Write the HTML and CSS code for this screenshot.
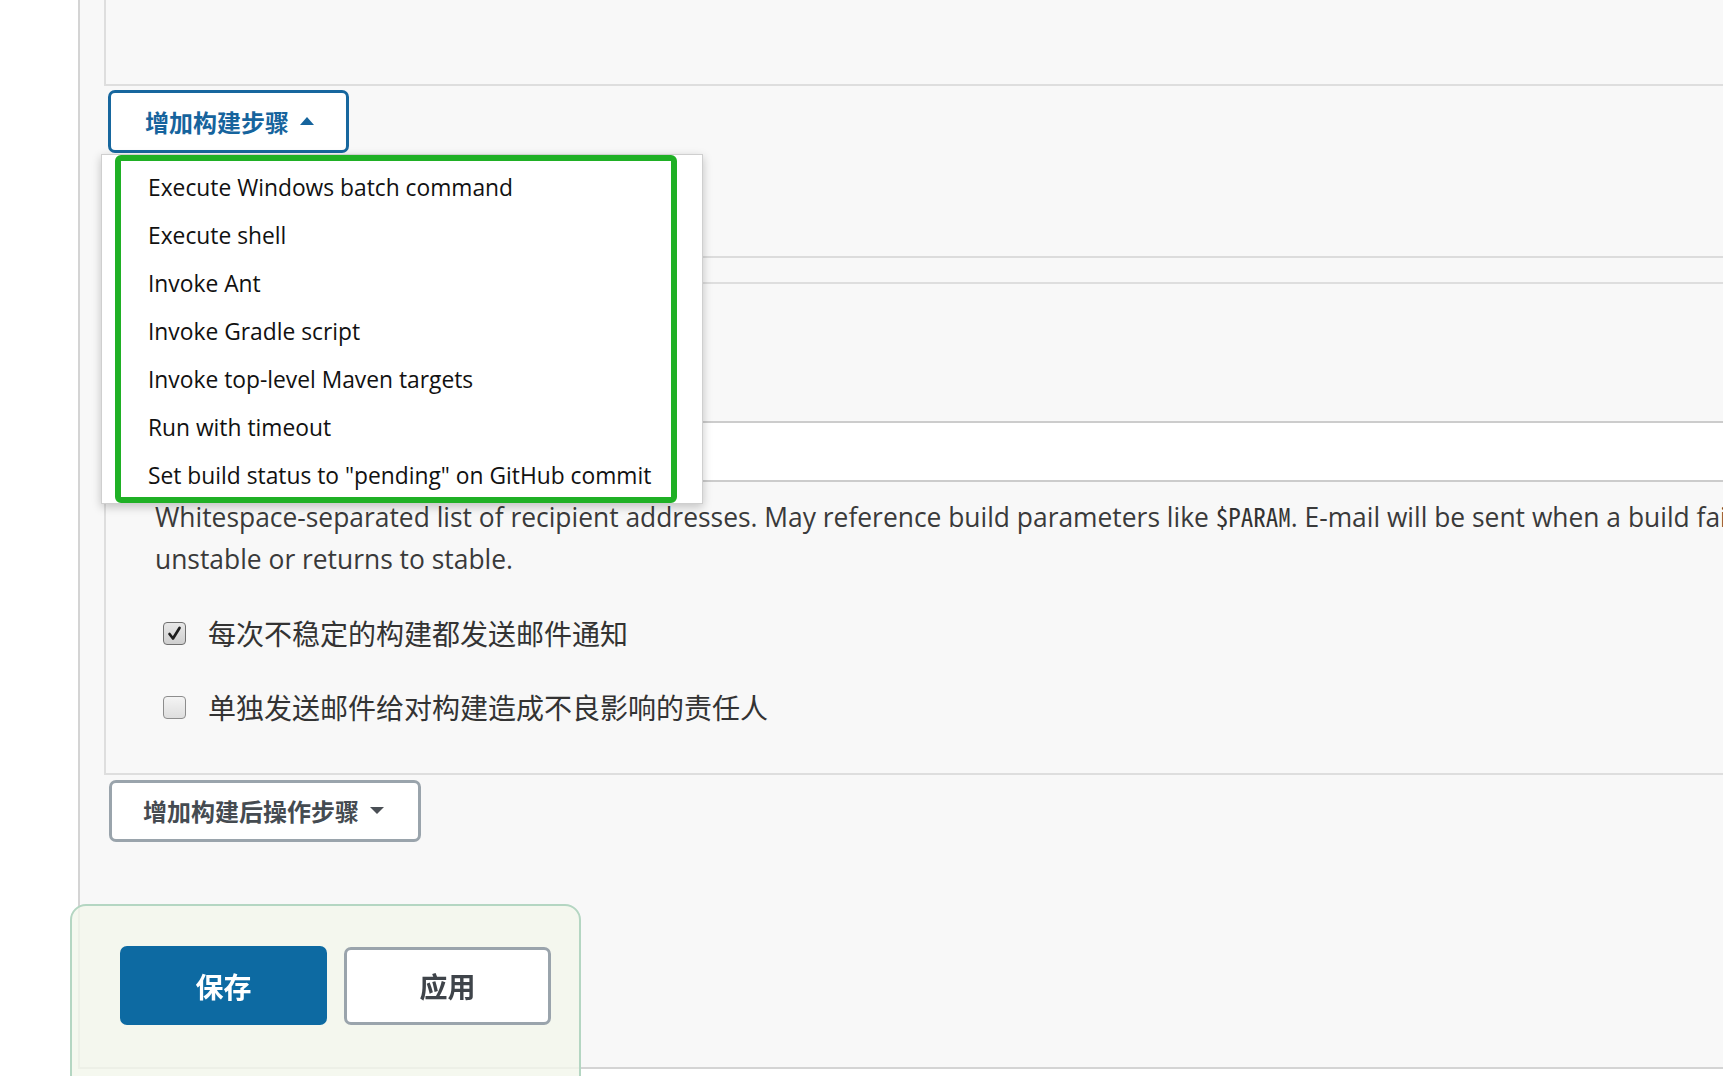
FILE: index.html
```html
<!DOCTYPE html>
<html lang="zh-CN">
<head>
<meta charset="utf-8">
<title>Jenkins 配置</title>
<link rel="stylesheet" href="styles.css">
</head>
<body>
<div class="page">
  <div class="gutter"></div>
  <main class="main">
    <div class="panel panel-top"></div>

    <div class="add-step">
      <button class="btn btn-blue">增加构建步骤<span class="caret caret-up"></span></button>
      <div class="dropdown">
        <ul class="menu">
          <li>Execute Windows batch command</li>
          <li>Execute shell</li>
          <li>Invoke Ant</li>
          <li>Invoke Gradle script</li>
          <li>Invoke top-level Maven targets</li>
          <li>Run with timeout</li>
          <li>Set build status to "pending" on GitHub commit</li>
        </ul>
      </div>
    </div>

    <div class="section-hidden"></div>

    <div class="panel panel-mail">
      <div class="field-label"></div>
      <div class="text-input"></div>
      <div class="help">Whitespace-separated list of recipient addresses. May reference build parameters like <code>$PARAM</code>. E-mail will be sent when a build fails, becomes<br>unstable or returns to stable.</div>
      <label class="check">
        <span class="box box-checked"><svg viewBox="0 0 23 23" width="23" height="23"><path d="M6.5 12 L10 16.5 L16.5 6" fill="none" stroke="#1e1e1e" stroke-width="2.7" stroke-linecap="round" stroke-linejoin="round"/></svg></span>
        <span class="check-text">每次不稳定的构建都发送邮件通知</span>
      </label>
      <label class="check">
        <span class="box"></span>
        <span class="check-text">单独发送邮件给对构建造成不良影响的责任人</span>
      </label>
    </div>

    <div class="post-step">
      <button class="btn btn-gray">增加构建后操作步骤<span class="caret caret-down"></span></button>
    </div>
  </main>
</div>

<div class="footer-bar">
  <button class="btn-save">保存</button>
  <button class="btn-apply">应用</button>
</div>
</body>
</html>
```

FILE: styles.css
```css
html, body {
  margin: 0;
  padding: 0;
}
body {
  width: 1723px;
  height: 1076px;
  overflow: hidden;
  background: #ffffff;
  font-family: "Open Sans", "Noto Sans CJK SC", sans-serif;
  color: #333;
}
.page {
  display: flex;
  align-items: flex-start;
}
.gutter {
  width: 78px;
  flex: none;
}
.main {
  flex: none;
  width: 2400px;
  height: 1067px;
  background: #f8f8f8;
  border-left: 2px solid #d4d4d4;
  border-bottom: 2px solid #d4d4d4;
  padding-left: 24px;
  box-sizing: content-box;
}
.panel {
  background: #f8f8f8;
  border: 2px solid #dedede;
}
.panel-top {
  height: 84px;
  border-top: none;
}

/* buttons */
.btn {
  display: flex;
  align-items: center;
  background: #fff;
  border-radius: 7px;
  font-family: "Noto Sans CJK SC", sans-serif;
  font-weight: 700;
  font-size: 24px;
  line-height: 1;
  box-sizing: border-box;
  cursor: pointer;
}
.btn-blue {
  height: 63px;
  width: 241px;
  border: 3px solid #17679e;
  color: #16649d;
  padding: 0 0 0 34px;
}
.btn-gray {
  height: 62px;
  width: 312px;
  border: 3px solid #9aa4ac;
  color: #454b51;
  padding: 0 0 0 31px;
}
.caret {
  display: inline-block;
  width: 0;
  height: 0;
  margin-left: 11px;
}
.caret-up {
  border-left: 7.5px solid transparent;
  border-right: 7.5px solid transparent;
  border-bottom: 8px solid #16649d;
  margin-top: -2px;
}
.caret-down {
  border-left: 7px solid transparent;
  border-right: 7px solid transparent;
  border-top: 7px solid #4a4f55;
  margin-top: -2px;
}

.add-step {
  position: relative;
  margin: 4px 0 0 4px;
  height: 63px;
}
.dropdown {
  position: absolute;
  z-index: 10;
  left: -7px;
  top: 64px;
  width: 602px;
  background: #fff;
  border: 1px solid #cfcfcf;
  box-shadow: 0 3px 9px rgba(0, 0, 0, 0.22);
  box-sizing: border-box;
}
.menu {
  list-style: none;
  margin: 0 25px 0 13px;
  padding: 0;
  border: 6px solid #1fb025;
  border-radius: 6px;
}
.menu li {
  height: 45px;
  padding-top: 3px;
  line-height: 48px;
  padding-left: 27px;
  font-size: 22.8px;
  color: #111;
  white-space: nowrap;
}

.section-hidden {
  height: 103px;
  border-bottom: 2px solid #dcdcdc;
}

.panel-mail {
  margin-top: 24px;
  height: 489px;
  display: flex;
  flex-direction: column;
}
.field-label {
  height: 137px;
  flex: none;
}
.text-input {
  flex: none;
  height: 57px;
  margin-left: 49px;
  background: #fff;
  border-top: 2px solid #cccccc;
  border-bottom: 2px solid #cccccc;
  border-left: 2px solid #cccccc;
}
.help {
  margin-top: 14px;
  padding-left: 49px;
  font-size: 26.4px;
  line-height: 42px;
  color: #3a3a3a;
  white-space: nowrap;
}
.help code {
  font-family: "Noto Sans Mono CJK SC", "Liberation Mono", monospace;
  font-size: 25px;
  line-height: 0;
  color: #333;
}
.check {
  display: flex;
  align-items: center;
  height: 44px;
  margin-left: 57px;
  font-family: "Noto Sans CJK SC", sans-serif;
  font-size: 28px;
  color: #333;
}
.check + .check {
  margin-top: 30px;
}
.help + .check {
  margin-top: 31px;
}
.box {
  flex: none;
  width: 23px;
  height: 23px;
  box-sizing: border-box;
  border: 1.5px solid #8d8d8d;
  border-radius: 4px;
  background: linear-gradient(#f4f4f4, #dedede);
  margin-right: 22px;
  display: flex;
  align-items: center;
  justify-content: center;
}
.box svg {
  display: block;
  margin: -1.5px;
}
.box-checked {
  border-color: #6f6f6f;
  background: linear-gradient(#e8e8e8, #cfcfcf);
}

.post-step {
  margin: 5px 0 0 5px;
}

/* bottom bar */
.footer-bar {
  position: fixed;
  left: 70px;
  top: 904px;
  width: 511px;
  height: 240px;
  box-sizing: border-box;
  border: 2px solid #b4d6c2;
  border-radius: 16px 16px 0 0;
  background: rgba(243, 246, 236, 0.82);
  padding: 40px 0 0 48px;
  display: flex;
  align-items: flex-start;
  gap: 17px;
}
.btn-save,
.btn-apply {
  width: 207px;
  height: 79px;
  border-radius: 7px;
  font-family: "Noto Sans CJK SC", sans-serif;
  font-weight: 700;
  font-size: 28px;
  box-sizing: border-box;
  cursor: pointer;
}
.btn-save {
  background: #0d6aa2;
  color: #fff;
  border: none;
}
.btn-apply {
  background: #fff;
  color: #3f444a;
  border: 3px solid #9aa4ac;
  margin-top: 1px;
  height: 78px;
}
```
